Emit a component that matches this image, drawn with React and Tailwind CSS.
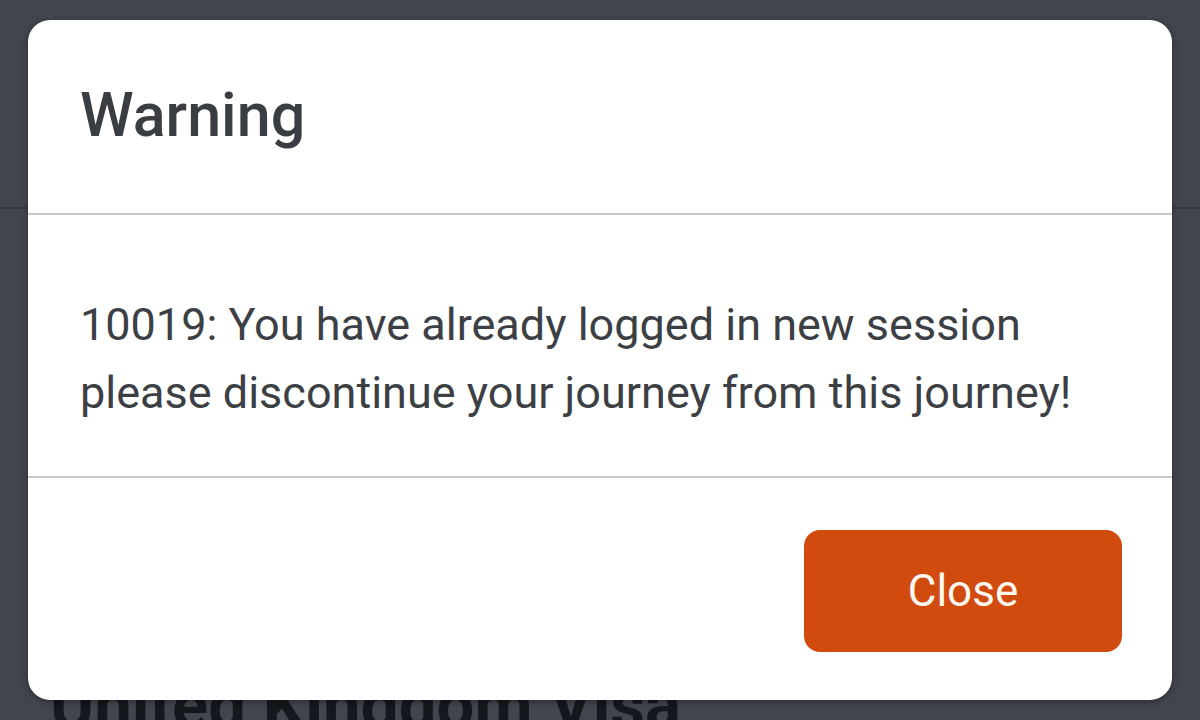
import React from 'react';

const font = { fontFamily: 'Roboto, "Noto Sans", sans-serif' };

export default function App() {
    return (
        <div className="relative w-[1200px] h-[720px] overflow-hidden bg-[#41454c]" style={font}>
            {/* ── Page behind the overlay ── */}
            <div className="h-[209px] border-b-2 border-[#33363b]" />
            <h1 className="pl-[50px] pt-[463px] text-[67px] font-bold leading-none text-[#14171b] whitespace-nowrap">
                United Kingdom Visa
            </h1>

            {/* ── Dialog ── */}
            <div className="absolute left-[28px] top-[20px] w-[1144px] h-[680px] flex flex-col rounded-[22px] bg-white shadow-[0_2px_6px_rgba(0,0,0,0.35)]">
                <div className="h-[195px] shrink-0 flex items-center px-[52px] border-b-2 border-[#c9c9c9]">
                    <h2 className="text-[61px] font-medium leading-none text-[#3a3d42] pb-[2px]">Warning</h2>
                </div>
                <div className="h-[263px] shrink-0 flex items-center px-[52px] border-b-2 border-[#c9c9c9]">
                    <p className="text-[45px] leading-[68px] text-[#3c3f44] pt-[27px]">
                        10019: You have already logged in new session
                        <br />
                        please discontinue your journey from this journey!
                    </p>
                </div>
                <div className="flex-1 flex items-center justify-end pr-[50px] pt-[3px]">
                    <button
                        type="button"
                        className="w-[318px] h-[122px] rounded-[16px] bg-[#d14a0e] text-[44px] text-[#fff8f0] leading-none"
                    >
                        Close
                    </button>
                </div>
            </div>
        </div>
    );
}
